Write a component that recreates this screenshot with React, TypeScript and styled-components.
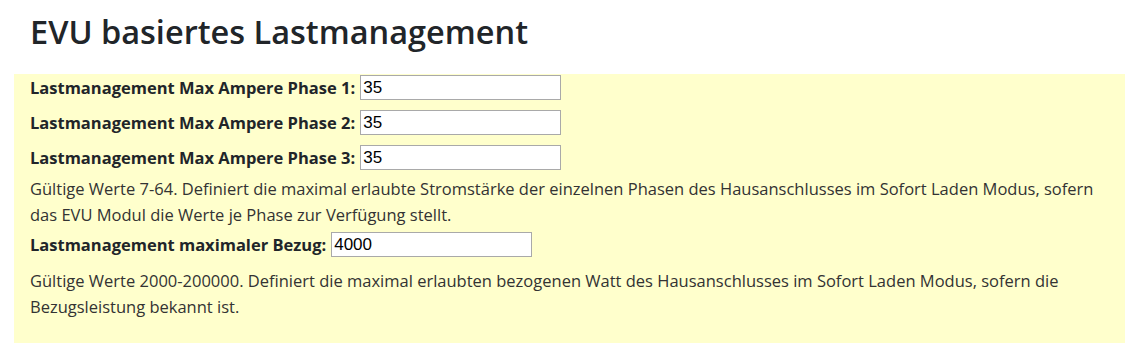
import React from 'react';
import styled, { createGlobalStyle } from 'styled-components';

const GlobalStyle = createGlobalStyle`
	body {
		margin: 0;
		background: #ffffff;
		font-family: 'Open Sans', 'Noto Sans', sans-serif;
		color: #212529;
	}
`;

const Page = styled.div`
	padding: 0 6px 0 14px;
`;

const Title = styled.h2`
	margin: 0;
	padding: 9px 16px 0;
	height: 74px;
	box-sizing: border-box;
	font-size: 32.5px;
	font-weight: 600;
	line-height: 46px;
	color: #212529;
`;

const Section = styled.div`
	background-color: #ffffcc;
	padding: 1px 16px 23px;
	font-size: 16.5px;
	line-height: 26px;
`;

const FieldRow = styled.div<{ $before?: number; $after?: number }>`
	display: flex;
	align-items: center;
	height: 25px;
	margin-top: ${(p) => p.$before ?? 0}px;
	margin-bottom: ${(p) => p.$after ?? 10}px;
`;

const Label = styled.label`
	font-weight: 700;
	margin-right: 5px;
	white-space: nowrap;
`;

const Input = styled.input`
	box-sizing: border-box;
	width: 201px;
	height: 25px;
	padding: 0 2px;
	border: 1px solid #a9a9a9;
	background: #ffffff;
	font-family: 'Liberation Sans', Arial, sans-serif;
	font-size: 17px;
	color: #000000;
	outline: none;
`;

const Help = styled.p`
	margin: 0;
	color: #333333;
`;

const phases = [1, 2, 3];

export default function App() {
	return (
		<>
			<GlobalStyle />
			<Page>
				<Title>EVU basiertes Lastmanagement</Title>
				<Section>
					{phases.map((n) => (
						<FieldRow key={n} $after={n === 3 ? 6 : 10}>
							<Label htmlFor={`lastmaxap${n}`}>Lastmanagement Max Ampere Phase {n}:</Label>
							<Input id={`lastmaxap${n}`} defaultValue="35" />
						</FieldRow>
					))}
					<Help>
						Gültige Werte 7-64. Definiert die maximal erlaubte Stromstärke der einzelnen Phasen des
						Hausanschlusses im Sofort Laden Modus, sofern das EVU Modul die Werte je Phase zur
						Verfügung stellt.
					</Help>
					<FieldRow $before={4} $after={11}>
						<Label htmlFor="lastmaxbezug">Lastmanagement maximaler Bezug:</Label>
						<Input id="lastmaxbezug" defaultValue="4000" />
					</FieldRow>
					<Help>
						Gültige Werte 2000-200000. Definiert die maximal erlaubten bezogenen Watt des
						Hausanschlusses im Sofort Laden Modus, sofern die Bezugsleistung bekannt ist.
					</Help>
				</Section>
			</Page>
		</>
	);
}
